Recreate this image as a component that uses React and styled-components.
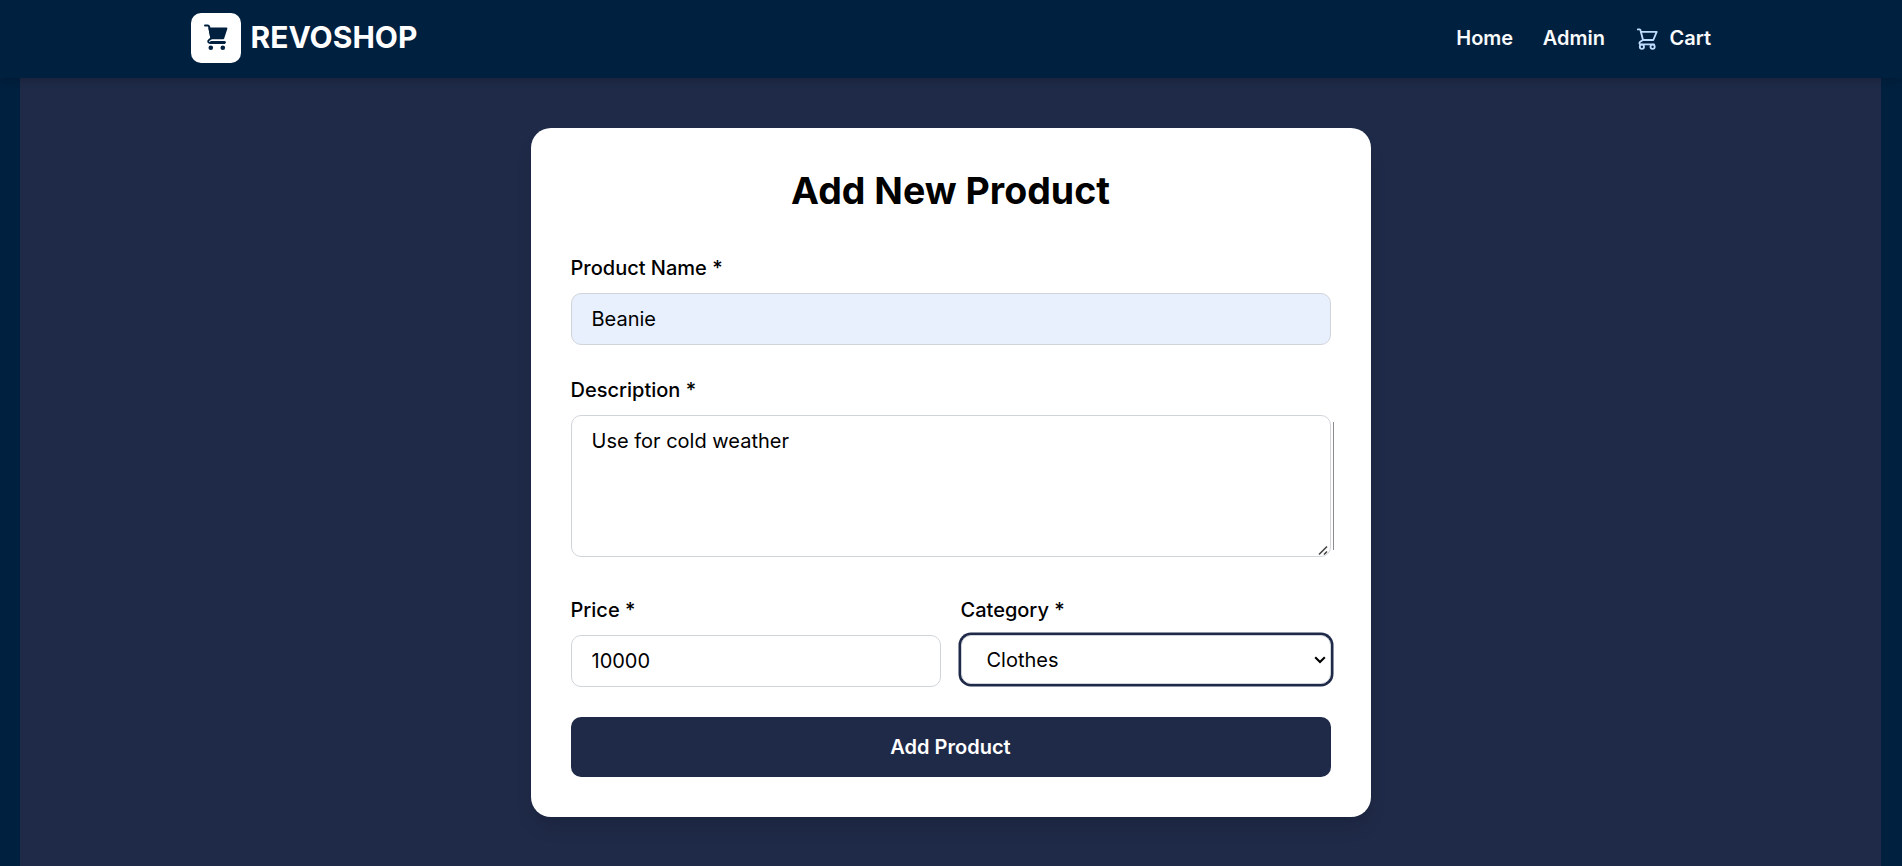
import React from 'react';
import styled, { createGlobalStyle } from 'styled-components';

const GlobalStyle = createGlobalStyle`
  *, *::before, *::after { box-sizing: border-box; }
  html { font-size: 20px; }
  body {
    margin: 0;
    background: #00203f;
    color: #000;
    font-family: Inter, "Liberation Sans", sans-serif;
    line-height: 1.5;
    overflow: hidden;
  }
`;

const Header = styled.header`
  position: relative;
  height: 78px;
  background: #00203f;
  box-shadow: 0 5px 7.5px -1px rgba(0, 0, 0, 0.1), 0 2.5px 5px -2.5px rgba(0, 0, 0, 0.1);
`;

const HeaderInner = styled.div`
  display: flex;
  justify-content: space-between;
  max-width: 1600px;
  height: 100%;
  margin: 0 auto;
  padding: 13px 40px 15px;
`;

const Brand = styled.a`
  display: flex;
  align-items: center;
  gap: 9.5px;
  color: #fff;
`;

const LogoBox = styled.span`
  display: grid;
  place-items: center;
  width: 50px;
  height: 50px;
  border-radius: 10px;
  background: #fff;
  color: #00203f;
`;

const BrandName = styled.span`
  padding-bottom: 2px;
  font-size: 30px;
  font-weight: 700;
  line-height: 40px;
`;

const Nav = styled.nav`
  display: flex;
  align-items: center;
  gap: 29.5px;
`;

const NavLink = styled.a`
  display: flex;
  align-items: center;
  gap: 10px;
  color: #f8fafc;
  font-weight: 600;

  svg { color: #bfdbfe; }
`;

const Main = styled.main`
  height: 788px;
  margin: 0 21px 0 20px;
  padding: 50px 0;
  background: #1f2a48;
`;

const Card = styled.section`
  width: 840px;
  margin: 0 auto;
  padding: 40px;
  border-radius: 20px;
  background: #fff;
  box-shadow: 0 12.5px 18.75px -3.75px rgba(0, 0, 0, 0.1), 0 5px 7.5px -5px rgba(0, 0, 0, 0.1);
`;

const Title = styled.h1`
  margin: 0 0 40px;
  font-size: 37.5px;
  font-weight: 700;
  line-height: 45px;
  text-align: center;
`;

const Form = styled.form`
  display: flex;
  flex-direction: column;
  gap: 30px;
`;

const Columns = styled.div`
  display: grid;
  grid-template-columns: 1fr 1fr;
  gap: 20px;
`;

const Field = styled.div`
  display: flex;
  flex-direction: column;
  padding-bottom: ${({ $after = 0 }) => $after}px;
`;

const Label = styled.label`
  margin-bottom: 10px;
  font-weight: 500;
  line-height: 30px;
`;

const Input = styled.input`
  width: 100%;
  height: 52px;
  padding: 10px 20px;
  border: 1px solid #d1d5db;
  border-radius: 10px;
  outline: none;
  background: ${({ $filled }) => ($filled ? '#e8f0fe' : '#fff')};
  color: #000;
  font: inherit;
`;

const AreaWrap = styled.div`
  position: relative;
  height: 142px;

  &::after {
    content: '';
    position: absolute;
    top: 7px;
    right: -3px;
    bottom: 7px;
    width: 1px;
    background: #8b8b92;
  }
`;

const TextArea = styled.textarea`
  display: block;
  width: 100%;
  height: 142px;
  padding: 10px 20px;
  border: 1px solid #d1d5db;
  border-radius: 10px;
  outline: none;
  color: #000;
  font: inherit;
  resize: none;
`;

const Grip = styled.svg`
  position: absolute;
  right: 2px;
  bottom: 1px;
  pointer-events: none;
`;

const SelectWrap = styled.div`
  position: relative;
  height: 49px;
`;

const Select = styled.select`
  display: block;
  appearance: none;
  width: 100%;
  height: 49px;
  padding: 0 25px;
  border: 1px solid #d1d5db;
  border-radius: 10px;
  outline: none;
  background: #fff;
  box-shadow: 0 0 0 2.5px #1f2a48;
  color: #000;
  font: inherit;
`;

const Chevron = styled.svg`
  position: absolute;
  top: 20px;
  right: 4px;
  pointer-events: none;
`;

const Submit = styled.button`
  height: 60px;
  border: 0;
  border-radius: 10px;
  background: #1f2a48;
  color: #fff;
  font: inherit;
  font-weight: 600;
`;

function CartSolid() {
  return (
    <svg width="28" height="28" viewBox="0 0 28 28" fill="none" stroke="currentColor" strokeLinecap="round" strokeLinejoin="round">
      <path d="M3 1.5h2.8c.8 0 1.1.4 1.3 1.1l2.3 11.6-2.1 1.6c-1.8 1.4-1.3 3.1.7 3.1h14.3" strokeWidth="2" />
      <path d="M7.5 4.5h16.9L21.2 14.3H9.4Z" fill="currentColor" strokeWidth="2" />
      <path d="M9.3 18.3h13.2" strokeWidth="2.6" />
      <circle cx="8.8" cy="23.8" r="2.3" fill="currentColor" stroke="none" />
      <circle cx="20.8" cy="23.8" r="2.3" fill="currentColor" stroke="none" />
    </svg>
  );
}

function CartOutline() {
  return (
    <svg width="25" height="25" viewBox="0 0 25 25" fill="none" stroke="currentColor" strokeWidth="1.85" strokeLinecap="round" strokeLinejoin="round">
      <path d="M3.8 3.4h1.7c.6 0 .9.3 1 .8l2.5 9.8" />
      <path d="M7 5.8h15.7l-3.4 8.2H9l-2.8 1.8c-1.3 1-.9 2.5.7 2.5h13.2" />
      <circle cx="7.9" cy="20.7" r="2.1" />
      <circle cx="18.6" cy="20.7" r="2.1" />
    </svg>
  );
}

export default function App() {
  return (
    <>
      <GlobalStyle />
      <Header>
        <HeaderInner>
          <Brand>
            <LogoBox><CartSolid /></LogoBox>
            <BrandName>REVOSHOP</BrandName>
          </Brand>
          <Nav>
            <NavLink>Home</NavLink>
            <NavLink>Admin</NavLink>
            <NavLink><CartOutline />Cart</NavLink>
          </Nav>
        </HeaderInner>
      </Header>
      <Main>
        <Card>
          <Title>Add New Product</Title>
          <Form>
            <Field>
              <Label htmlFor="name">Product Name *</Label>
              <Input id="name" defaultValue="Beanie" $filled />
            </Field>
            <Field $after={8}>
              <Label htmlFor="description">Description *</Label>
              <AreaWrap>
                <TextArea id="description" defaultValue="Use for cold weather" />
                <Grip width="11" height="11" viewBox="0 0 11 11" stroke="#444" strokeWidth="1.6">
                  <path d="M1 9.5 9 1.5M6 9.5 9 6.5" />
                </Grip>
              </AreaWrap>
            </Field>
            <Columns>
              <Field>
                <Label htmlFor="price">Price *</Label>
                <Input id="price" defaultValue="10000" />
              </Field>
              <Field>
                <Label htmlFor="category">Category *</Label>
                <SelectWrap>
                  <Select id="category" defaultValue="Clothes">
                    <option>Clothes</option>
                  </Select>
                  <Chevron width="14" height="10" viewBox="0 0 14 10" fill="none" stroke="#000" strokeWidth="2.1">
                    <path d="m2.2 2.3 4.8 4.8 4.8-4.8" />
                  </Chevron>
                </SelectWrap>
              </Field>
            </Columns>
            <Submit type="button">Add Product</Submit>
          </Form>
        </Card>
      </Main>
    </>
  );
}
